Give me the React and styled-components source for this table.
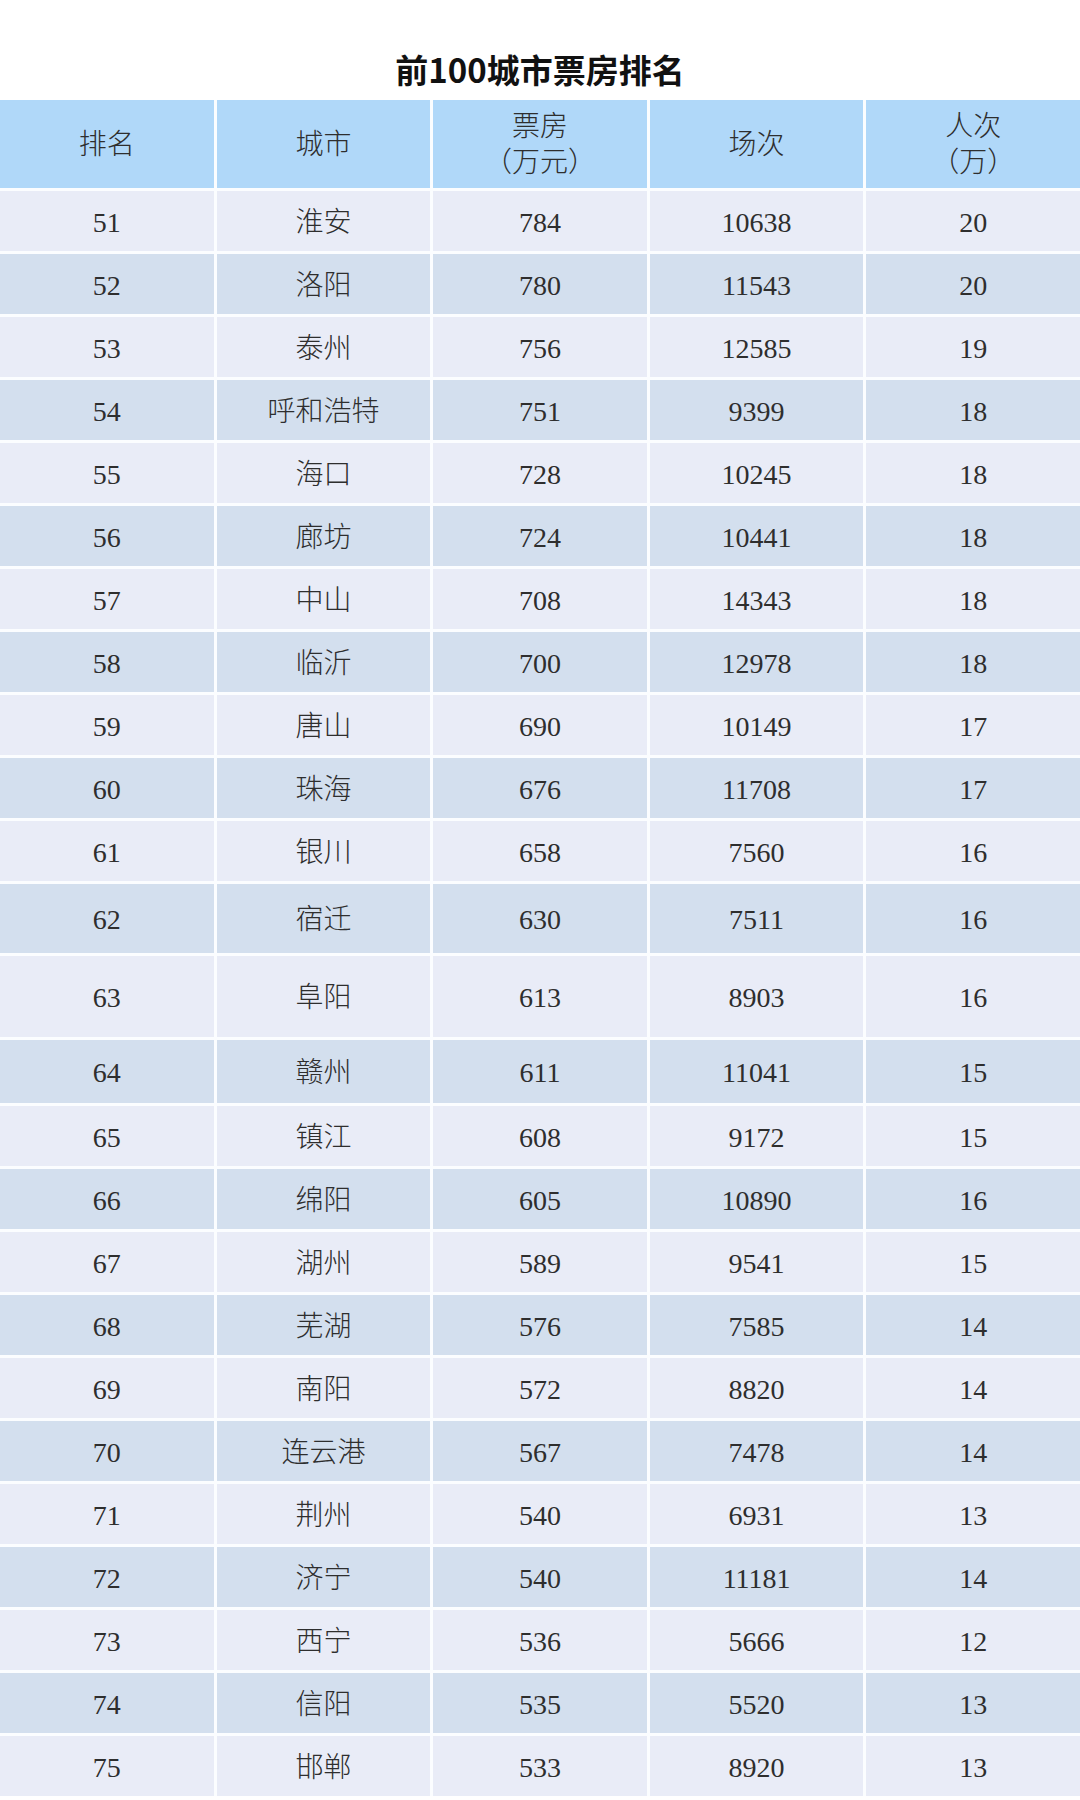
import styled, { createGlobalStyle } from 'styled-components';

const GlobalStyle = createGlobalStyle`
  html, body {
    margin: 0;
    padding: 0;
    background: #ffffff;
  }
`;

const rows = [
  ['51', '淮安', '784', '10638', '20'],
  ['52', '洛阳', '780', '11543', '20'],
  ['53', '泰州', '756', '12585', '19'],
  ['54', '呼和浩特', '751', '9399', '18'],
  ['55', '海口', '728', '10245', '18'],
  ['56', '廊坊', '724', '10441', '18'],
  ['57', '中山', '708', '14343', '18'],
  ['58', '临沂', '700', '12978', '18'],
  ['59', '唐山', '690', '10149', '17'],
  ['60', '珠海', '676', '11708', '17'],
  ['61', '银川', '658', '7560', '16'],
  ['62', '宿迁', '630', '7511', '16', 69],
  ['63', '阜阳', '613', '8903', '16', 81],
  ['64', '赣州', '611', '11041', '15', 63],
  ['65', '镇江', '608', '9172', '15'],
  ['66', '绵阳', '605', '10890', '16'],
  ['67', '湖州', '589', '9541', '15'],
  ['68', '芜湖', '576', '7585', '14'],
  ['69', '南阳', '572', '8820', '14'],
  ['70', '连云港', '567', '7478', '14'],
  ['71', '荆州', '540', '6931', '13'],
  ['72', '济宁', '540', '11181', '14'],
  ['73', '西宁', '536', '5666', '12'],
  ['74', '信阳', '535', '5520', '13'],
  ['75', '邯郸', '533', '8920', '13'],
];

const Page = styled.div`
  width: 1080px;
  height: 1800px;
  overflow: hidden;
  display: flex;
  flex-direction: column;
`;

const Title = styled.h1`
  margin: 0;
  height: 100px;
  padding-top: 49px;
  box-sizing: border-box;
  text-align: center;
  font-family: "Noto Sans CJK SC", "Noto Sans", sans-serif;
  font-weight: 700;
  font-size: 33px;
  line-height: 40px;
  color: #111;
`;

const Table = styled.div`
  display: grid;
  grid-template-columns: repeat(5, 1fr);
  column-gap: 3px;
  row-gap: 3px;
  background: #fbfdff;
  font-family: "Liberation Serif", "Noto Sans CJK SC", serif;
  font-weight: 300;
  font-size: 28px;
  color: #2e2e2e;
`;

const Cell = styled.div`
  display: flex;
  flex-direction: column;
  align-items: center;
  justify-content: center;
  text-align: center;
  height: ${(p) => p.$h}px;
  box-sizing: border-box;
  padding-top: 3px;
  background: ${(p) => p.$bg};
  line-height: 34px;
`;

const HeadCell = styled(Cell)`
  padding-top: 2px;
  line-height: 36px;
`;

const headers = [['排名'], ['城市'], ['票房', '（万元）'], ['场次'], ['人次', '（万）']];

export default function App() {
  return (
    <Page>
      <GlobalStyle />
      <Title>前100城市票房排名</Title>
      <Table>
        {headers.map((lines, i) => (
          <HeadCell key={'h' + i} $h={88} $bg="#b0d8f9">
            {lines.map((l) => (
              <span key={l}>{l}</span>
            ))}
          </HeadCell>
        ))}
        {rows.map((r, idx) => {
          const bg = idx % 2 === 0 ? '#e9ecf7' : '#d3dfee';
          const h = r[5] || 60;
          return r.slice(0, 5).map((v, j) => (
            <Cell key={r[0] + '-' + j} $h={h} $bg={bg}>
              {v}
            </Cell>
          ));
        })}
      </Table>
    </Page>
  );
}
